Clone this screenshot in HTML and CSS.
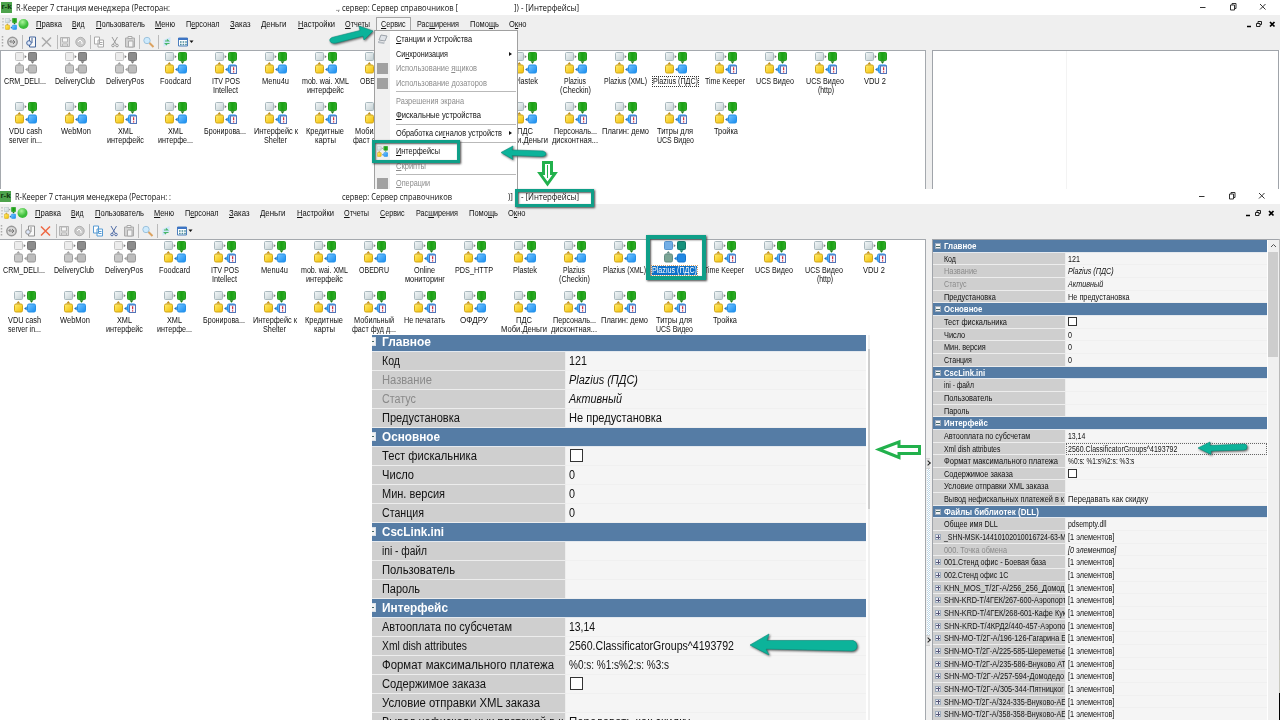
FILE: index.html
```html
<!DOCTYPE html>
<html lang="ru">
<head>
<meta charset="utf-8">
<title>R-Keeper 7 — Интерфейсы</title>
<link rel="stylesheet" href="styles.css">
</head>
<body>
<svg class="defs" width="0" height="0">
  <defs>
    <linearGradient id="gw" x2="1" y2="1"><stop offset="0" stop-color="#f4f8f9"/><stop offset="1" stop-color="#c3cfd2"/></linearGradient>
    <linearGradient id="gg" x2="1"><stop offset="0" stop-color="#43b83c"/><stop offset=".45" stop-color="#18a010"/><stop offset="1" stop-color="#31ad2a"/></linearGradient>
    <linearGradient id="gy" x2="1" y2="1"><stop offset="0" stop-color="#ffee75"/><stop offset="1" stop-color="#f2bd00"/></linearGradient>
    <linearGradient id="gb" x2="1" y2="1"><stop offset="0" stop-color="#77c5ff"/><stop offset="1" stop-color="#158cf0"/></linearGradient>
    <radialGradient id="ball" cx=".4" cy=".3"><stop offset="0" stop-color="#a9f49a"/><stop offset="1" stop-color="#3cbd3a"/></radialGradient>
    <symbol id="node" viewBox="0 0 22 22">
      <rect class="n1" x=".5" y=".5" width="8" height="8" rx="1"/>
      <rect class="n2" x="13.5" y=".5" width="8" height="8" rx="1"/>
      <rect class="n3" x=".5" y="13" width="8" height="8" rx="1.5"/>
      <rect class="n4" x="13.5" y="13" width="8" height="8" rx="1.5"/>
      <path class="a1" d="M9.700 3l2 1.700-2 1.600z"/>
      <path class="a2" d="M15.5 9.3h4l-2 2.400z"/>
      <path class="a3" d="M2.3 12.5h4l-2-2.600z"/>
      <path class="a4" d="M12.700 15.5v4l-2.600-2z"/>
    </symbol>
    <symbol id="badge" viewBox="0 0 22 22">
      <rect x="15.5" y="14" width="6" height="7.5" fill="#f7f8ff" stroke="#5274b8"/>
      <path d="M18.6 15.2v3.1M18.6 19.2v1.2" stroke="#d12c3b" stroke-width="1.2"/>
    </symbol>
    <symbol id="tools" viewBox="0 0 195 16">
      <path d="M2.5 2v12" stroke="#aaa" stroke-dasharray="1.5 1.5" stroke-width="1.5"/>
      <circle cx="12.5" cy="8" r="4.7" fill="#d8d8d8" stroke="#999" stroke-width="1.5"/><path d="M10 8h5M13 6l2 2-2 2M11.5 6l-2 2" stroke="#777" fill="none"/>
      <path d="M22.500 1v14M57.500 1v14M90.500 1v14M139.500 1v14M158.500 1v14" stroke="#bababa"/>
      <g class="t-doc"><path d="M29.500 3h6v10h-6z" fill="#f8f8f8" stroke="currentColor"/><circle cx="29" cy="9" r="2.300" fill="#dfe9fc" stroke="currentColor"/><path d="M32 4v5" stroke="currentColor"/></g>
      <path class="t-x" d="M42 3.500l9 9M51 3.500l-9 9" stroke-width="1.500"/>
      <g stroke="#b4b4b4" fill="#ddd"><path d="M60.500 3.500h9v9h-9z"/><path d="M62.500 4h5v4h-5zM62.500 10h5v2h-5z" fill="#f7f7f7"/></g>
      <circle cx="80.500" cy="8" r="4.700" fill="#c9c9c9" stroke="#b0b0b0"/><path d="M78 8l2-2 2 2v2" stroke="#fff" fill="none"/>
      <g class="t-copy"><path d="M94.500 3h5v7h-5zM98 6h5.500v7H98z" fill="#fff" stroke="currentColor"/><path d="M99.500 8.500h3M99.500 10.500h3" stroke="currentColor"/></g>
      <g class="t-cut" stroke="currentColor" fill="none"><path d="M112 3l4 7M117.500 3l-4 7" /><circle cx="113" cy="11.500" r="1.300"/><circle cx="117" cy="11.500" r="1.300"/></g>
      <g fill="#d2d2d2" stroke="#aaa"><path d="M125.500 4h9v9h-9z"/><path d="M128 2.500h4v2h-4zM128.500 7h4.500v6h-4.500z" fill="#f4f4f4"/></g>
      <circle cx="147" cy="6.500" r="3.200" fill="#cdeafd" stroke="#9cc2dc"/><path d="M149.500 9l4 4" stroke="#dba260" stroke-width="2"/>
      <path d="M163.500 6l7-3v6l-7 4z" fill="#cfe6fa"/><path d="M165 7h3.500l-1.500-1.500M169.500 9.500h-4l1.500 1.500" fill="none" stroke="#4ab769" stroke-width="1.200"/>
      <path d="M178.500 4h9v8h-9z" fill="#fff" stroke="#4d7fbd"/><path d="M178 4h10v2h-10z" fill="#3e75c4"/><path d="M180 8h7M180 10.500h7" stroke="#4a8b9c" stroke-dasharray="1.600 1" stroke-width="1.300"/>
      <path d="M189.500 6.500h4l-2 2.500z" fill="#111"/>
    </symbol>
    <symbol id="winctl" viewBox="0 0 80 30">
      <g fill="none" stroke="#333"><path d="M-.500 7.500h6"/><path d="M30.500 5h4v5h-4zM32 5V3.500h4v5h-1.500M60 4l5.500 5.500M65.500 4l-5.500 5.500"/></g>
      <path d="M47 26.500h4" stroke="#000" stroke-width="1.500"/><path d="M56.500 23.500h3.500v3h-3.500zM58 23v-1.500h3.500v3H60" stroke="#222" fill="none"/><path d="M70 22l4.500 4.500M74.500 22L70 26.500" stroke="#000" stroke-width="1.700"/>
    </symbol>
  </defs>
</svg>

<main class="page">
  <section class="window window-top">
    <header class="titlebar">
      <span class="app-icon">r-k</span>
      <span data-w="154">R-Keeper 7 станция менеджера (Ресторан:</span>
      <span class="t-server" data-w="122">., сервер: Сервер справочников [</span>
      <span class="t-mode" data-w="65">]) - [Интерфейсы]</span>
      <svg class="winctl" width="80" height="30"><use href="#winctl"/></svg>
    </header>
    <div class="bars"><nav class="menubar"></nav><div class="toolbar"><svg width="195" height="16"><use href="#tools"/></svg></div></div>
    <div class="client">
      <div class="icons"></div>
      <div class="splitter"></div>
      <div class="props-empty"></div>
    </div>
    <div class="dropdown">
      <div class="dd-item"><svg class="dd-pic" width="12" height="11"><path d="M4 1l6 1-2 5-6-1z" fill="#dfe3e8" stroke="#9aa1a8"/><path d="M1 7l7 1.500-1 1.500-6-1z" fill="#b9bec4"/></svg><span data-w="76"><u>С</u>танции и Устройства</span></div>
      <div class="dd-item"><span data-w="52">Си<u>н</u>хронизация</span><i></i></div>
      <div class="dd-item off"><b></b><span data-w="81">Использование <u>я</u>щиков</span></div>
      <div class="dd-item off"><b></b><span data-w="91">Использование <u>д</u>озаторов</span></div>
      <hr>
      <div class="dd-item off"><span data-w="68">Разрешения экрана</span></div>
      <div class="dd-item"><span data-w="85"><u>Ф</u>искальные устройства</span></div>
      <hr>
      <div class="dd-item"><span data-w="106">Обработка си<u>г</u>налов устройств</span><i></i></div>
      <hr>
      <div class="dd-item"><svg class="dd-pic" width="11" height="11"><use href="#node"/></svg><span data-w="44"><u>И</u>нтерфейсы</span></div>
      <div class="dd-item off"><span data-w="30"><u>С</u>крипты</span></div>
      <hr>
      <div class="dd-item off"><b></b><span data-w="34"><u>О</u>перации</span></div>
    </div>
  </section>

  <section class="window window-bottom">
    <header class="titlebar">
      <span class="app-icon">r-k</span>
      <span data-w="156">R-Keeper 7 станция менеджера (Ресторан: :</span>
      <span class="t-server" data-w="110">сервер: Сервер справочников</span>
      <span class="t-mode" data-w="5">)]</span>
      <span class="t-name" data-w="58">- [Интерфейсы]</span>
      <svg class="winctl" width="80" height="30"><use href="#winctl"/></svg>
    </header>
    <div class="bars"><nav class="menubar"></nav><div class="toolbar"><svg width="195" height="16"><use href="#tools"/></svg></div></div>
    <div class="client">
      <div class="icons"></div>
      <div class="splitter"><em></em><s></s><em></em></div>
      <div class="props"><div class="grid grid-small"></div><div class="scroll"><svg width="11" height="12"><path d="M3 7l2.500-2.500L8 7" fill="none" stroke="#555"/></svg><div class="thumb"></div></div></div>
    </div>
  </section>

  <aside class="zoomed"><div class="grid grid-large"></div><div class="zoom-scroll"></div></aside>

  <div class="mark mark-menu"></div>
  <div class="mark mark-title"></div>
  <div class="mark mark-icon"></div>
  <svg class="arrows" width="1280" height="720">
    <path d="M1279.500 640v53" stroke="#c9c9c0"/><path d="M1279.500 693v27" stroke="#000"/>
    <g class="teal">
      <path d="M373 31l-14-5 1 4.500-28 7q-4 2-1 5 2 1 5 .500l27-7 1 4z"/>
      <path d="M501 152.500l12-6.500-1 4 31 1q3 1 3 3t-4 2.500l-30-1 1 4z"/>
      <path d="M1198 448l12-6v3.500l34-1.500q3 0 3 3t-3 3l-33 1v3.500z"/>
      <path d="M750 645l19-11-2 6.500 86 0q4 1 4 5.500t-5 5l-86-2 3 6z"/>
    </g>
    <g class="lime">
      <path d="M543.500 162.500h8v11h3.500l-7.500 10.500-7.500-10.500h3.500z"/>
      <path class="core" d="M547.500 165v13"/>
      <path d="M879 449.500l20-7.500v4.500h20.500v7H899v4z"/>
    </g>
  </svg>
</main>
<script src="app.js"></script>
</body>
</html>
```
FILE: styles.css
```css
* { box-sizing: border-box; }
body { margin: 0; background: #fff; color: #111; font-family: "Liberation Sans", Arial, sans-serif; font-size: 8.5px; overflow: hidden; }
.defs { position: absolute; }
.page { position: relative; width: 1280px; height: 720px; overflow: hidden; background: #fff; }
[data-w] { display: inline-block; white-space: pre; flex: none; text-align: left; transform-origin: 0 50%; }
u { text-underline-offset: 1px; text-decoration-thickness: 1px; }

.window { position: relative; width: 1280px; overflow: hidden; display: flex; flex-direction: column; }
.window-top { height: 189px; }
.window-bottom { height: 531px; }
.titlebar { height: 15px; flex: none; display: flex; align-items: center; position: relative; background: #fff; font: 8.5px/15px "Open Sans", "Noto Sans", sans-serif; }
.app-icon { width: 11px; height: 11px; margin: 0 4px 0 1px; background: #4da34c; color: #10350f; font: bold 8px/10px "Liberation Sans", sans-serif; text-align: center; overflow: hidden; }
.window-bottom .app-icon { margin: 0 4px 0 0; }
.t-server { margin-left: 166px; }
.t-mode { margin-left: 56px; }
.window-bottom .t-server { margin-left: 171px; }
.window-bottom .t-mode { margin-left: 56px; }
.window-bottom .t-name { margin-left: 7px; }
.winctl { position: absolute; left: 1200px; top: 0; z-index: 2; overflow: visible; }
.window-bottom .winctl { left: 1199px; }

.bars { height: 35px; flex: none; background: #efefef; }
.menubar { height: 18px; display: flex; align-items: center; padding-left: 1px; }
.window-bottom .menubar { padding-left: 0; }
.menu-icons { flex: none; width: 29.500px; height: 14px; }
.menu-item { height: 14px; line-height: 14px; padding: 0 5.300px; flex: none; }
.window-top .menu-item.open { border: 1px solid #a5a5a5; border-bottom: 0; padding: 0 4.300px; line-height: 12px; background: #f4f4f4; }
.toolbar { height: 17px; padding-top: 1px; }
.toolbar svg { display: block; }
.window-bottom .toolbar svg { margin-left: -1px; }
.t-doc { color: var(--doc); }
.t-x { stroke: var(--x); }
.t-copy { color: var(--copy); }
.t-cut { color: var(--cut); }
.window-top { --doc: #42659c; --x: #aaa; --copy: #a9a9a9; --cut: #9b9b9b; }
.window-bottom { --doc: #929292; --x: #ee6845; --copy: #579bd3; --cut: #536fa8; }

.client { flex: 1; display: flex; min-height: 0; }
.icons { width: 926px; flex: none; border: 1px solid #a5a9ae; border-width: 1px 1px 0 0; background: #fff; display: grid; grid-template-columns: repeat(18, 50px); grid-auto-rows: 50px; align-content: start; padding-top: 1px; }
.window-top .icons { border-left-width: 1px; }
.cell { display: flex; flex-direction: column; align-items: center; text-align: center; white-space: nowrap; min-width: 0; }
.cell svg { width: 22px; height: 22px; margin: 0 0 3px; flex: none; }
.cell .label { display: flex; flex-direction: column; align-items: center; line-height: 9px; margin-left: -1px; }
.window-top .cell.covered .label { visibility: hidden; }
.n1 { fill: var(--c1, url(#gw)); stroke: var(--s1, #a9b8bd); }
.n2 { fill: var(--c2, url(#gg)); stroke: var(--s2, #249b1e); }
.n3 { fill: var(--c3, url(#gy)); stroke: var(--s3, #d2a61a); }
.n4 { fill: var(--c4, url(#gb)); stroke: var(--s4, #2491e8); }
.a1 { fill: #777; }
.a2 { fill: var(--s2, #16750f); }
.a3 { fill: var(--s3, #bb8c18); }
.a4 { fill: var(--s4, #1272c8); }
.cell.grey { --c1: #ececec; --s1: #c4c4c4; --c2: #8c8c8c; --s2: #777; --c3: #c9c9c9; --s3: #9f9f9f; --c4: #bcbcbc; --s4: #9a9a9a; }
.window-top .picked .label { outline: 1px dotted #333; }
.window-bottom .picked { --c1: #73aee5; --s1: #5794cf; --c2: #15917b; --s2: #117969; --c3: #7ba596; --s3: #628c83; --c4: #2188e2; --s4: #1275cf; }
.window-bottom .picked .label { background: #0b6fc9; color: #fff; outline: 1px dotted #d9a066; }
.splitter { width: 6px; flex: none; background: #efefef; display: flex; flex-direction: column; padding-top: 219px; }
.window-top .splitter { padding: 0; }
.splitter em { height: 11px; width: 4px; background: #e2e2e2; border: 1px solid #d0d0d0; border-width: 1px 0; position: relative; }
.splitter em::after { content: ""; position: absolute; left: 0; top: 2px; width: 3px; height: 3px; border: 1px solid #222; border-width: 1px 1px 0 0; transform: rotate(45deg); }
.splitter s { height: 166px; width: 3px; margin-left: 1px; background: repeating-conic-gradient(#bcd6e6 0 25%, #fff 0 50%) 0 0 / 2px 2px; }
.props-empty { flex: 1; margin-right: 1px; border: 1px solid #a0a4aa; border-bottom: 0; background: linear-gradient(90deg, #fff 133px, #f3f3f3 133px, #f3f3f3 134px, #fff 134px); }

.props { flex: 1; display: flex; border-top: 1px solid #a0a4aa; border-left: 1px solid #a0a4aa; border-right: 2px solid #b9b9b9; min-width: 0; }
.grid { overflow: hidden; flex: none; }
.grid-small { width: 334px; font-size: 8.300px; --h: 12.670px; --label: 133px; --pad: 11px; --box: 9px; }
.grid-large { width: 494px; font-size: 12.300px; --h: 19px; --label: 194px; --pad: 10px; --box: 13px; }
.row { height: var(--h); display: flex; line-height: var(--h); }
.key { width: var(--label); padding-left: var(--pad); background: #cfcfcf; border-bottom: 1px solid #ededed; overflow: hidden; flex: none; position: relative; white-space: nowrap; border-right: 1px solid #eee; }
.val { flex: 1; background: #f5f5f5; border-bottom: 1px solid #f0f0f0; padding-left: 3px; overflow: hidden; white-space: nowrap; }
.row.dim .key { color: #8a8a8a; }
.row.dim .val { font-style: italic; }
.row.head { background: #557ca5; color: #fff; font-weight: bold; border-bottom: 1px solid #e4e9ef; padding-left: var(--pad); position: relative; }
.grid-small .val { padding-left: 2px; }
.grid-small .focus .val { outline: 1px dotted #666; outline-offset: -1px; }
.check { display: block; width: var(--box); height: var(--box); border: 1px solid #333; background: #fff; margin-top: 1.500px; }
.grid-large .check { margin: 2px 0 0 1px; }
.tog { position: absolute; left: 2px; top: 3px; width: 6px; height: 6px; border: 1px solid #9eacbd; background: linear-gradient(#466, #466) center / 4px 1px no-repeat #f3f3f3; }
.tog.plus { background: linear-gradient(#557, #557) center / 4px 1px no-repeat, linear-gradient(#557, #557) center / 1px 4px no-repeat #e9e9f0; }
.grid-large .tog { left: -5px; top: 4px; width: 9px; height: 9px; background-size: 5px 1px; border-color: #d9e1e9; }
.scroll { flex: 1; margin-left: 1px; background: #f0f0f0; }
.scroll svg { display: block; }
.thumb { height: 105px; width: 10px; background: #cdcdcd; }

.zoomed { position: absolute; left: 372px; top: 335px; width: 499px; height: 385px; overflow: hidden; background: #fff; display: flex; align-items: flex-start; }
.zoomed .grid { margin-top: -2px; }
.zoom-scroll { width: 2px; height: 385px; margin-left: 2px; background: linear-gradient(#f0f0f0 14px, #cdcdcd 14px, #cdcdcd 174px, #f0f0f0 174px); }

.dropdown { position: absolute; left: 374px; top: 30px; width: 144px; height: 170px; border: 1px solid #a0a0a0; background: linear-gradient(90deg, #f0f0f0 15px, #fff 15px); padding-top: 1px; }
.dd-item { height: 14.600px; line-height: 14.600px; padding-left: 21px; position: relative; }
.dd-item.off { color: #8b8b8b; }
.dd-item b { position: absolute; left: 2px; top: 2px; width: 11px; height: 11px; background: #a1a1a1; }
.dd-item i { position: absolute; right: 5px; top: 5px; border-left: 3px solid #111; border-top: 2.500px solid transparent; border-bottom: 2.500px solid transparent; }
.dd-pic { position: absolute; left: 2px; top: 2px; }
.dropdown hr { height: 1px; border: 0; background: #b9b9b9; margin: 1.100px 1px 1.200px 21px; }

.mark { position: absolute; border: 3px solid #0f9f88; box-shadow: 1px 1px 2px #444, inset 1px 1px 2px #555; }
.mark-menu { left: 372px; top: 140px; width: 88px; height: 23px; }
.mark-title { left: 515px; top: 189px; width: 79px; height: 18px; }
.mark-icon { left: 646px; top: 235px; width: 60px; height: 45px; border-width: 4px; }
.arrows { position: absolute; left: 0; top: 0; pointer-events: none; }
.teal { fill: #0cb39a; stroke: #0a8f7d; stroke-width: .6; filter: drop-shadow(1px 1.500px 1px #555); }
.lime { fill: #fff; stroke: #22b14c; stroke-width: 3; }
.core { stroke-width: 1; }
```
FILE: app.js
```js
const menus = [["<u>П</u>равка", 26], ["<u>В</u>ид", 12.5], ["<u>П</u>ользователь", 49], ["<u>М</u>еню", 20], ["П<u>е</u>рсонал", 33.5], ["<u>З</u>аказ", 20.5], ["<u>Д</u>еньги", 25.5], ["<u>Н</u>астройки", 37], ["<u>О</u>тчеты", 25], ["<u>С</u>ервис", 24.5], ["Рас<u>ш</u>ирения", 42], ["Помо<u>щ</u>ь", 29], ["О<u>к</u>но", 17.5]];

// Each entry: flags (g = inactive, b = badge, s = selected, c = under the open menu), then label lines as [text, width].
const items = [
  ["g", ["CRM_DELI...", 42]], ["g", ["DeliveryClub", 40]], ["g", ["DeliveryPos", 38]], ["", ["Foodcard", 31]],
  ["b", ["ITV POS", 28], ["Intellect", 25]], ["", ["Menu4u", 27]], ["", ["mob. wai. XML", 47], ["интерфейс", 37]], ["", ["OBEDRU", 30]],
  ["bc", ["Online", 21], ["мониторинг", 40]], ["c", ["PDS_HTTP", 38]], ["", ["Plastek", 24]], ["", ["Plazius", 22], ["(Checkin)", 31]],
  ["", ["Plazius (XML)", 43]], ["s", ["Plazius (ПДС)", 45]], ["b", ["Time Keeper", 40]], ["b", ["UCS Видео", 38]],
  ["b", ["UCS Видео", 38], ["(http)", 16]], ["b", ["VDU 2", 22]],
  ["", ["VDU cash", 33], ["server in...", 33]], ["", ["WebMon", 30]], ["b", ["XML", 15], ["интерфейс", 37]], ["", ["XML", 15], ["интерфе...", 35]],
  ["b", ["Бронирова...", 42]], ["b", ["Интерфейс к", 44], ["Shelter", 23]], ["b", ["Кредитные", 38], ["карты", 21]], ["b", ["Мобильный", 40], ["фаст фуд д...", 44]],
  ["bc", ["Не печатать", 41]], ["c", ["ОФДРУ", 28]], ["", ["ПДС", 16], ["Моби.Деньги", 46]], ["b", ["Персональ...", 43], ["дисконтная...", 46]],
  ["b", ["Плагин: демо", 47]], ["b", ["Титры для", 36], ["UCS Видео", 37]], ["", ["Тройка", 24]]
];

// Header: [text, width]; property: [key, width, value, width, flags].
const el = ["[1 элементов]", 70];
const rows = [
  ["Главное", 49], ["Код", 18, "121", 18], ["Название", 50, "Plazius (ПДС)", 69, "dim"], ["Статус", 34, "Активный", 53, "dim"], ["Предустановка", 78, "Не предустановка", 93],
  ["Основное", 58], ["Тест фискальника", 95, "check"], ["Число", 32, "0", 6], ["Мин. версия", 63, "0", 6], ["Станция", 42, "0", 6],
  ["CscLink.ini", 62], ["ini - файл", 45, ""], ["Пользователь", 73, ""], ["Пароль", 38, ""],
  ["Интерфейс", 66], ["Автооплата по субсчетам", 130, "13,14", 26], ["Xml dish attributes", 85, "2560.ClassificatorGroups^4193792", 165, "focus"], ["Формат максимального платежа", 172, "%0:s: %1:s%2:s: %3:s", 100],
  ["Содержимое заказа", 104, "check"], ["Условие отправки XML заказа", 158, ""], ["Вывод нефискальных платежей в к", 181, "Передавать как скидку", 121],
  ["Файлы библиотек (DLL)", 143], ["Общее имя DLL", 81, "pdsempty.dll", 58],
  ["_SHN-MSK-14410102010016724-63-М", 184, ...el, "plus"], ["000. Точка обмена", 95, "[0 элементов]", 73, "dim"], ["001.Стенд офис - Боевая база", 154, ...el, "plus"], ["002.Стенд офис 1С", 97, ...el, "plus"],
  ["KHN_MOS_Т/2Г-А/256_256_Домод", 182, ...el, "plus"], ["SHN-KRD-Т/4ГЕК/267-600-Аэропорт", 184, ...el, "plus"], ["SHN-KRD-Т/4ГЕК/268-601-Кафе Кук", 184, ...el, "plus"], ["SHN-KRD-Т/4КРД2/440-457-Аэропо", 183, ...el, "plus"],
  ["SHN-MO-Т/2Г-А/196-126-Гагарина Б", 184, ...el, "plus"], ["SHN-MO-Т/2Г-А/225-585-Шереметье", 184, ...el, "plus"], ["SHN-MO-Т/2Г-А/235-586-Внуково АТ", 184, ...el, "plus"], ["SHN-MO-Т/2Г-А/257-594-Домодедо", 181, ...el, "plus"],
  ["SHN-MO-Т/2Г-А/305-344-Пятницког", 181, ...el, "plus"], ["SHN-MO-Т/2Г-А/324-335-Внуково-АЕ", 184, ...el, "plus"], ["SHN-MO-Т/2Г-А/358-358-Внуково-АЕ", 184, ...el, "plus"]
];

const span = (text, w) => `<span data-w="${w}">${text}</span>`;

document.querySelectorAll(".menubar").forEach(bar => {
  bar.innerHTML = `<svg class="menu-icons"><path d="M2 1v12" stroke="#aaa" stroke-dasharray="1.5 1.5"/><svg x="4" y="1" width="12" height="12"><use href="#node"/></svg><circle cx="22.500" cy="7" r="5" fill="url(#ball)"/></svg>` +
    menus.map(([t, w]) => `<span class="menu-item${t.includes("ервис") ? " open" : ""}">${span(t, w)}</span>`).join("");
});

document.querySelectorAll(".icons").forEach(box => {
  box.innerHTML = items.map(([flags, ...lines]) => {
    let cls = "cell";
    if (flags.includes("g")) cls += " grey";
    if (flags.includes("s")) cls += " picked";
    if (flags.includes("c")) cls += " covered";
    const badge = flags.includes("b") ? '<use href="#badge"/>' : "";
    return `<div class="${cls}"><svg><use href="#node"/>${badge}</svg><div class="label">${lines.map(l => span(...l)).join("")}</div></div>`;
  }).join("");
});

function fill(selector, scale, list) {
  document.querySelector(selector).innerHTML = list.map(([key, kw, value, vw, flag = ""]) => {
    const k = span(key, kw * scale);
    if (value === undefined) return `<div class="row head"><i class="tog"></i>${k}</div>`;
    const v = value === "check" ? '<i class="check"></i>' : value ? span(value, vw * scale) : "";
    return `<div class="row ${flag}"><div class="key">${flag === "plus" ? '<i class="tog plus"></i>' : ""}${k}</div><div class="val">${v}</div></div>`;
  }).join("");
}
fill(".grid-small", 0.663, rows);
fill(".grid-large", 1, rows.slice(0, 21));

// Condense or widen each label to its set width.
document.querySelectorAll("[data-w]").forEach(node => {
  const target = +node.dataset.w;
  const natural = node.getBoundingClientRect().width;
  node.style.width = target + "px";
  node.style.transform = `scaleX(${target / natural})`;
  node.firstChild.parentNode.style.marginRight = "0";
});
document.querySelectorAll("[data-w]").forEach(node => {
  // The box is scaled along with its glyphs, so it keeps its natural width and gives the rest back as margin.
  const target = +node.dataset.w;
  node.style.width = "";
  node.style.marginRight = target - node.offsetWidth + "px";
});
```
